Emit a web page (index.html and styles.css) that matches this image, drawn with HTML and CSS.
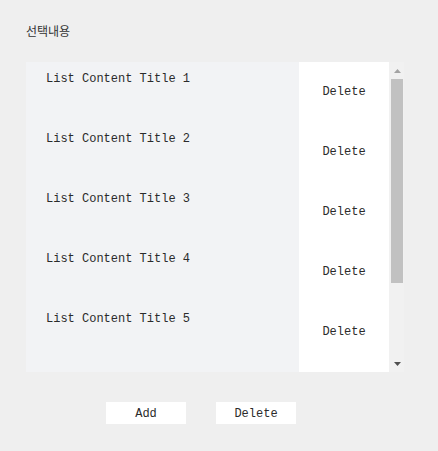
FILE: index.html
```html
<!DOCTYPE html>
<html lang="ko">
<head>
<meta charset="utf-8">
<title>선택내용</title>
<link rel="stylesheet" href="styles.css">
</head>
<body>
<div class="wrap">
  <div class="heading">선택내용</div>
  <div class="listbox">
    <ul class="list">
      <li class="row"><span class="title">List Content Title 1</span><span class="del">Delete</span></li>
      <li class="row"><span class="title">List Content Title 2</span><span class="del">Delete</span></li>
      <li class="row"><span class="title">List Content Title 3</span><span class="del">Delete</span></li>
      <li class="row"><span class="title">List Content Title 4</span><span class="del">Delete</span></li>
      <li class="row"><span class="title">List Content Title 5</span><span class="del">Delete</span></li>
      <li class="row row-tail"><span class="title"></span><span class="del"></span></li>
    </ul>
    <div class="scrollbar">
      <div class="sb-btn">
        <svg width="7" height="4" viewBox="0 0 7 4"><polygon points="0,4 3.5,0 7,4" fill="#a3a3a3"/></svg>
      </div>
      <div class="sb-track">
        <div class="sb-thumb"></div>
      </div>
      <div class="sb-btn">
        <svg width="7" height="4" viewBox="0 0 7 4"><polygon points="0,0 7,0 3.5,4" fill="#505050"/></svg>
      </div>
    </div>
  </div>
  <div class="actions">
    <button class="btn">Add</button>
    <button class="btn">Delete</button>
  </div>
</div>
</body>
</html>
```

FILE: styles.css
```css
html, body {
  margin: 0;
  padding: 0;
  background: #efefef;
}
.wrap {
  padding: 22px 0 0 26px;
}
.heading {
  font-family: "Noto Sans CJK KR", "Noto Sans", sans-serif;
  font-size: 12px;
  line-height: 17px;
  color: #333;
  margin-bottom: 23px;
}
.listbox {
  display: flex;
  width: 378px;
  height: 310px;
}
.list {
  list-style: none;
  margin: 0;
  padding: 0;
  flex: 1;
  display: flex;
  flex-direction: column;
  background: #f2f3f5;
  overflow: hidden;
}
.row {
  display: flex;
  height: 60px;
  flex: none;
  font-family: "Liberation Mono", monospace;
  font-size: 12px;
  color: #2b2b2b;
}
.row-tail {
  flex: 1;
  height: auto;
}
.title {
  flex: 1;
  padding: 10px 0 0 20px;
}
.del {
  width: 90px;
  background: #fff;
  text-align: center;
  padding-top: 23px;
}
.scrollbar {
  width: 15px;
  display: flex;
  flex-direction: column;
  background: #f1f1f1;
}
.sb-btn {
  height: 17px;
  display: flex;
  align-items: center;
  justify-content: center;
  padding-left: 1px;
}
.sb-track {
  flex: 1;
  padding: 0 1px 0 2px;
}
.sb-thumb {
  height: 204px;
  background: #c1c1c1;
}
.actions {
  display: flex;
  gap: 30px;
  padding: 30px 0 0 80px;
}
.btn {
  width: 80px;
  height: 22px;
  border: 0;
  padding: 1px 0 0;
  background: #fff;
  font-family: "Liberation Mono", monospace;
  font-size: 12px;
  color: #2b2b2b;
}
```
